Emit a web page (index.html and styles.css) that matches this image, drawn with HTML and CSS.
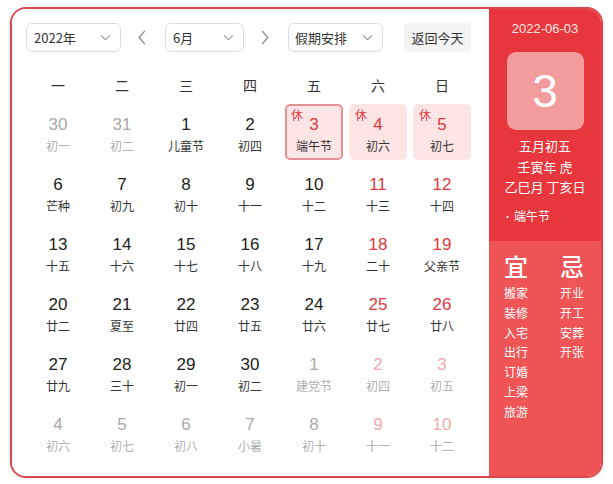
FILE: index.html
```html
<!DOCTYPE html>
<html lang="zh">
<head>
<meta charset="utf-8">
<link rel="stylesheet" href="styles.css">
</head>
<body>
<div class="cal">
  <div class="main">
    <div class="toolbar">
      <div class="select sel-year"><span>2022年</span><svg class="chev" viewBox="0 0 12 8"><path d="M1 1.5 L6 6.5 L11 1.5" fill="none" stroke="#999" stroke-width="1.2"/></svg></div>
      <svg class="nav" viewBox="0 0 8 16"><path d="M7 1 L1 8 L7 15" fill="none" stroke="#888" stroke-width="1.4"/></svg>
      <div class="select sel-month"><span>6月</span><svg class="chev" viewBox="0 0 12 8"><path d="M1 1.5 L6 6.5 L11 1.5" fill="none" stroke="#999" stroke-width="1.2"/></svg></div>
      <svg class="nav" viewBox="0 0 8 16"><path d="M1 1 L7 8 L1 15" fill="none" stroke="#888" stroke-width="1.4"/></svg>
      <div class="select sel-hol"><span>假期安排</span><svg class="chev" viewBox="0 0 12 8"><path d="M1 1.5 L6 6.5 L11 1.5" fill="none" stroke="#999" stroke-width="1.2"/></svg></div>
      <div class="today-btn">返回今天</div>
    </div>
    <div class="weekdays">
      <span>一</span><span>二</span><span>三</span><span>四</span><span>五</span><span>六</span><span>日</span>
    </div>
    <div class="grid">
      <div class="cell other"><b>30</b><i>初一</i></div>
      <div class="cell other"><b>31</b><i>初二</i></div>
      <div class="cell"><b>1</b><i>儿童节</i></div>
      <div class="cell"><b>2</b><i>初四</i></div>
      <div class="cell rest selected"><em>休</em><b>3</b><i>端午节</i></div>
      <div class="cell rest"><em>休</em><b>4</b><i>初六</i></div>
      <div class="cell rest"><em>休</em><b>5</b><i>初七</i></div>

      <div class="cell"><b>6</b><i>芒种</i></div>
      <div class="cell"><b>7</b><i>初九</i></div>
      <div class="cell"><b>8</b><i>初十</i></div>
      <div class="cell"><b>9</b><i>十一</i></div>
      <div class="cell"><b>10</b><i>十二</i></div>
      <div class="cell wkend"><b>11</b><i>十三</i></div>
      <div class="cell wkend"><b>12</b><i>十四</i></div>

      <div class="cell"><b>13</b><i>十五</i></div>
      <div class="cell"><b>14</b><i>十六</i></div>
      <div class="cell"><b>15</b><i>十七</i></div>
      <div class="cell"><b>16</b><i>十八</i></div>
      <div class="cell"><b>17</b><i>十九</i></div>
      <div class="cell wkend"><b>18</b><i>二十</i></div>
      <div class="cell wkend"><b>19</b><i>父亲节</i></div>

      <div class="cell"><b>20</b><i>廿二</i></div>
      <div class="cell"><b>21</b><i>夏至</i></div>
      <div class="cell"><b>22</b><i>廿四</i></div>
      <div class="cell"><b>23</b><i>廿五</i></div>
      <div class="cell"><b>24</b><i>廿六</i></div>
      <div class="cell wkend"><b>25</b><i>廿七</i></div>
      <div class="cell wkend"><b>26</b><i>廿八</i></div>

      <div class="cell"><b>27</b><i>廿九</i></div>
      <div class="cell"><b>28</b><i>三十</i></div>
      <div class="cell"><b>29</b><i>初一</i></div>
      <div class="cell"><b>30</b><i>初二</i></div>
      <div class="cell other"><b>1</b><i>建党节</i></div>
      <div class="cell other wkend"><b>2</b><i>初四</i></div>
      <div class="cell other wkend"><b>3</b><i>初五</i></div>

      <div class="cell other"><b>4</b><i>初六</i></div>
      <div class="cell other"><b>5</b><i>初七</i></div>
      <div class="cell other"><b>6</b><i>初八</i></div>
      <div class="cell other"><b>7</b><i>小暑</i></div>
      <div class="cell other"><b>8</b><i>初十</i></div>
      <div class="cell other wkend"><b>9</b><i>十一</i></div>
      <div class="cell other wkend"><b>10</b><i>十二</i></div>
    </div>
  </div>
  <div class="side">
    <div class="side-top">
      <div class="side-date">2022-06-03</div>
      <div class="big-day">3</div>
      <div class="lunar">
        <div>五月初五</div>
        <div>壬寅年 虎</div>
        <div>乙巳月 丁亥日</div>
      </div>
      <div class="fest"><span class="dot">•</span>端午节</div>
    </div>
    <div class="side-bottom">
      <div class="yiji">
        <div class="yj-title">宜</div>
        <div>搬家</div><div>装修</div><div>入宅</div><div>出行</div><div>订婚</div><div>上梁</div><div>旅游</div>
      </div>
      <div class="yiji">
        <div class="yj-title">忌</div>
        <div>开业</div><div>开工</div><div>安葬</div><div>开张</div>
      </div>
    </div>
  </div>
</div>
</body>
</html>
```

FILE: styles.css
```css
* { box-sizing: border-box; }
html, body { margin: 0; padding: 0; background: #fff; }
body {
  font-family: "Liberation Sans", "Noto Sans CJK SC", sans-serif;
  color: #222;
}
.cal {
  margin: 7px 0 0 10px;
  width: 593px;
  height: 471px;
  border: 2px solid #d9464b;
  border-radius: 16px;
  overflow: hidden;
  display: flex;
  box-shadow: 0 1px 4px rgba(0,0,0,0.12);
}
.main {
  flex: none;
  width: 477px;
  padding: 14px 0 0 14px;
  background: #fff;
}
.toolbar {
  display: flex;
  align-items: center;
  height: 29px;
}
.select {
  flex: none;
  height: 29px;
  border: 1px solid #dcdcdc;
  border-radius: 6px;
  display: flex;
  align-items: center;
  justify-content: space-between;
  padding: 0 9px 0 7px;
  font-size: 13px;
  color: #333;
  font-family: "Noto Sans CJK SC", sans-serif;
}
.select span { line-height: 1; }
.chev { width: 11px; height: 7px; }
.sel-year { width: 95px; }
.sel-month { width: 79px; }
.sel-hol { width: 95px; padding-left: 6px; }
.nav { flex: none; width: 8px; height: 15px; margin: 0 19px 0 17px; }
.today-btn {
  flex: none;
  margin-left: 21px;
  height: 29px;
  width: 67px;
  border-radius: 4px;
  background: #f4f4f4;
  font-size: 13px;
  font-family: "Noto Sans CJK SC", sans-serif;
  color: #333;
  display: flex;
  align-items: center;
  justify-content: center;
}
.weekdays {
  display: grid;
  grid-template-columns: repeat(7, 58px);
  column-gap: 6px;
  margin: 0 0 0 3px;
  height: 52px;
  align-items: center;
  padding-top: 14px;
  font-family: "Noto Sans CJK SC", sans-serif;
  font-size: 14px;
  color: #333;
  text-align: center;
}
.grid {
  display: grid;
  grid-template-columns: repeat(7, 58px);
  grid-auto-rows: 56px;
  column-gap: 6px;
  row-gap: 4px;
  margin: 0 0 0 3px;
}
.cell {
  position: relative;
  border-radius: 5px;
  display: flex;
  flex-direction: column;
  align-items: center;
  padding-top: 11px;
}
.cell b {
  font-weight: normal;
  font-size: 17px;
  line-height: 20px;
  color: #222;
}
.cell i {
  font-style: normal;
  font-family: "Noto Sans CJK SC", sans-serif;
  font-size: 12px;
  line-height: 16px;
  margin-top: 3px;
  color: #333;
}
.cell.wkend b { color: #dd3a40; }
.cell.other b { color: #a8a8a8; }
.cell.other i { color: #b0b0b0; }
.cell.other.wkend b { color: #f0a8ab; }
.cell.rest { background: #fde4e5; }
.cell.rest b { color: #dd3a40; }
.cell.selected { border: 2px solid #e79095; padding-top: 9px; }
.cell em {
  position: absolute;
  left: 6px;
  top: 4px;
  font-style: normal;
  font-family: "Noto Sans CJK SC", sans-serif;
  font-size: 12px;
  line-height: 14px;
  color: #dd3a40;
}
.cell.selected em { left: 4px; top: 2px; }
.side {
  flex: 1;
  min-width: 0;
  display: flex;
  flex-direction: column;
  color: #fff;
  font-family: "Noto Sans CJK SC", sans-serif;
}
.side-top {
  background: #e8373c;
  height: 232px;
  display: flex;
  flex-direction: column;
  align-items: center;
  padding-top: 12px;
}
.side-date {
  font-family: "Liberation Sans", sans-serif;
  font-size: 13px;
  line-height: 16px;
  color: #fde8e8;
}
.big-day {
  margin-top: 15px;
  width: 77px;
  height: 78px;
  border-radius: 9px;
  background: #f29c9d;
  display: flex;
  align-items: center;
  justify-content: center;
  font-family: "Liberation Sans", sans-serif;
  font-size: 46px;
  color: #fff;
}
.lunar {
  margin-top: 6px;
  text-align: center;
  font-size: 13px;
  line-height: 20.5px;
}
.fest {
  align-self: flex-start;
  margin: 10px 0 0 14px;
  font-size: 12px;
  line-height: 16px;
}
.dot { font-size: 9px; margin-right: 2px; vertical-align: 1px; }
.side-bottom {
  flex: 1;
  background: #ef5457;
  display: flex;
  padding: 10px 0 0 15px;
}
.yiji {
  width: 56px;
  font-size: 12px;
  line-height: 19.8px;
}
.yiji + .yiji { width: auto; }
.yj-title {
  font-size: 24px;
  font-weight: 500;
  line-height: 30px;
  margin-bottom: 2px;
}
```
